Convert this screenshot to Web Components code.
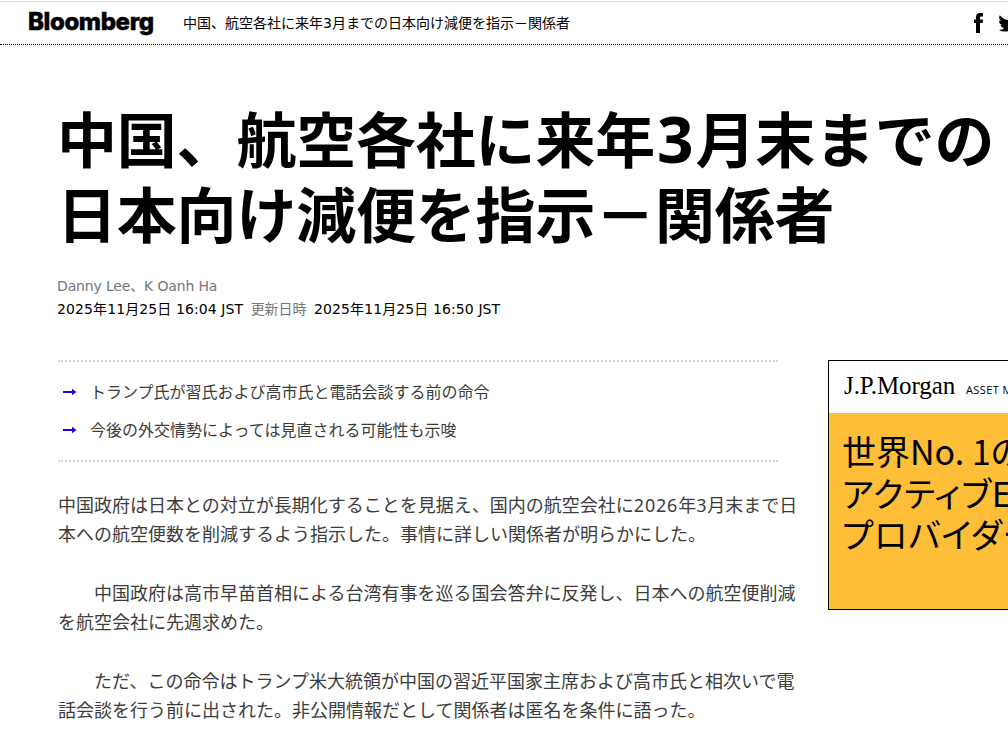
<!DOCTYPE html>
<html lang="ja">
<head>
<meta charset="utf-8">
<title>Bloomberg</title>
<style>
html { overflow: hidden; }
body {
  margin: 0;
  width: 1008px;
  height: 735px;
  overflow: hidden;
  background: #fff;
  color: #000;
  font-family: "DejaVu Sans", "Noto Sans CJK JP", sans-serif;
}
</style>
</head>
<body>
<article-page></article-page>

<script>
function define(name, html) {
  const template = document.createElement('template');
  template.innerHTML = html;
  customElements.define(name, class extends HTMLElement {
    constructor() {
      super();
      this.attachShadow({ mode: 'open' });
      this.shadowRoot.appendChild(template.content.cloneNode(true));
    }
  });
}

define('site-header', `
<style>
:host {
  display: flex;
  align-items: center;
  box-sizing: border-box;
  height: 45px;
  padding-left: 28px;
  border-top: 1px solid #fff;
  border-bottom: 1px dotted #000;
  box-shadow: inset 0 1px #dcdfdc;
  overflow: hidden;
}
.logo {
  flex: none;
  width: 155px;
  padding-bottom: 2px;
  font: 800 24px/30px Inter, sans-serif;
  letter-spacing: -0.4px;
  -webkit-text-stroke: 0.5px #000;
}
.title {
  flex: none;
  width: 790px;
  font-size: 14px;
  line-height: 20px;
  white-space: nowrap;
}
svg { display: block; flex: none; }
.tw { margin-left: 14px; }
</style>
<div class="logo">Bloomberg</div>
<div class="title"><slot></slot></div>
<svg width="11" height="22" viewBox="0 0 11 22"><path d="M3 21V11H1V7.500H3V5C3 2.500 4.500 1 7 1H10V4.500H8Q7 4.500 7 5.500V7.500H10L9.600 11H7V21Z"/></svg>
<svg class="tw" width="22" height="18" viewBox="0 0 22 18"><path d="M22 2.500L19.500 5C20 13 14 17.500 7 17.500Q3 17.500 1 16Q4.500 16 6.500 14Q3.500 14 2.500 11H4.500Q1 10 1 6.700L3 7.200Q0 5 1.800 1.200Q5 5.500 10.500 6C9.500 1 15 -1 18 2L21 1L19 3.200Z"/></svg>
`);

define('article-heading', `
<style>
:host { display: block; margin-top: 60px; padding-left: 57px; }
h1 {
  margin: 0;
  font-size: 60px;
  line-height: 75px;
  font-weight: bold;
  letter-spacing: -0.2px;
  white-space: nowrap;
}
.num {
  padding: 0 2px;
  font-family: "Noto Sans", sans-serif;
  font-size: 64px;
  line-height: 1px;
}
</style>
<h1>中国、航空各社に来年<span class="num">3</span>月末までの<br>日本向け減便を指示－関係者</h1>
`);

define('article-byline', `
<style>
:host {
  display: block;
  margin-top: 20px;
  padding-left: 57px;
  font-size: 14px;
  line-height: 23px;
  white-space: nowrap;
}
.muted { color: #767676; }
.authors { letter-spacing: -0.15px; }
.label { margin: 0 3px; }
.time { letter-spacing: 0.1px; }
</style>
<div class="muted authors">Danny Lee、K Oanh Ha</div>
<div class="dates"><span class="time">2025年11月25日 16:04 JST</span> <span class="muted label">更新日時</span> <span class="time">2025年11月25日 16:50 JST</span></div>
`);

define('summary-list', `
<style>
:host {
  display: block;
  box-sizing: border-box;
  width: 720px;
  height: 102px;
  padding-top: 11px;
  border-top: 2px dotted #d5d5d5;
  border-bottom: 2px dotted #d5d5d5;
}
</style>
<slot></slot>
`);

define('summary-item', `
<style>
:host {
  display: flex;
  align-items: center;
  height: 38px;
  padding-left: 5px;
  gap: 13px;
  color: #3c3c3c;
  font-size: 16px;
  line-height: 24px;
  white-space: nowrap;
}
svg { display: block; }
span { padding-top: 1px; }
</style>
<svg width="14" height="8" viewBox="0 0 14 8"><path fill="#2800d7" d="M0 3H9V0.800L13.500 4L9 7.200V5H0Z"/></svg>
<span><slot></slot></span>
`);

define('article-text', `
<style>
:host {
  display: block;
  margin: 0 0 30px;
  color: #3c3c3c;
  font-family: "Noto Sans", "Noto Sans CJK JP", sans-serif;
  font-size: 18px;
  line-height: 29px;
  white-space: nowrap;
}
::slotted(b) { font-weight: normal; letter-spacing: 0.8px; }
</style>
<slot></slot>
`);

define('side-ad', `
<style>
:host {
  display: block;
  flex: none;
  box-sizing: border-box;
  width: 180px;
  height: 250px;
  border: 1px solid #000;
  border-right: 0;
  background: #ffbe37;
  overflow: hidden;
}
.brand {
  display: flex;
  align-items: baseline;
  box-sizing: border-box;
  height: 52px;
  padding: 10px 0 0 15px;
  background: #fff;
  white-space: nowrap;
}
.jpm {
  flex: none;
  width: 122px;
  font: 25px/30px "Liberation Serif", serif;
  letter-spacing: -0.1px;
}
.am { font: 11px/14px "Open Sans", sans-serif; letter-spacing: 0.4px; }
.copy {
  padding: 17px 0 0 13px;
  font: 34px/41.500px "Noto Sans CJK JP", sans-serif;
  font-feature-settings: "palt";
  white-space: nowrap;
}
.wide { letter-spacing: 0.9px; }
</style>
<div class="brand"><span class="jpm">J.P.Morgan</span><span class="am">ASSET M</span></div>
<div class="copy">世界No. 1の<br><span class="wide">アクティブE<br>プロバイダー</span></div>
`);

define('article-page', `
<style>
:host { display: block; }
.columns {
  display: flex;
  align-items: flex-start;
  gap: 50px;
  margin-top: 39px;
  padding-left: 58px;
}
.main { width: 720px; flex: none; }
.body { padding-top: 29px; }
</style>
<site-header>中国、航空各社に来年3月までの日本向け減便を指示－関係者</site-header>
<article-heading></article-heading>
<article-byline></article-byline>
<div class="columns">
  <div class="main">
    <summary-list>
      <summary-item>トランプ氏が習氏および高市氏と電話会談する前の命令</summary-item>
      <summary-item>今後の外交情勢によっては見直される可能性も示唆</summary-item>
    </summary-list>
    <div class="body">
      <article-text>中国政府は日本との対立が長期化することを見据え、国内の航空会社に<b>2026</b>年<b>3</b>月末まで日<br>本への航空便数を削減するよう指示した。事情に詳しい関係者が明らかにした。</article-text>
      <article-text>　　中国政府は高市早苗首相による台湾有事を巡る国会答弁に反発し、日本への航空便削減<br>を航空会社に先週求めた。</article-text>
      <article-text>　　ただ、この命令はトランプ米大統領が中国の習近平国家主席および高市氏と相次いで電<br>話会談を行う前に出された。非公開情報だとして関係者は匿名を条件に語った。</article-text>
    </div>
  </div>
  <side-ad></side-ad>
</div>
`);
</script>
</body>
</html>
